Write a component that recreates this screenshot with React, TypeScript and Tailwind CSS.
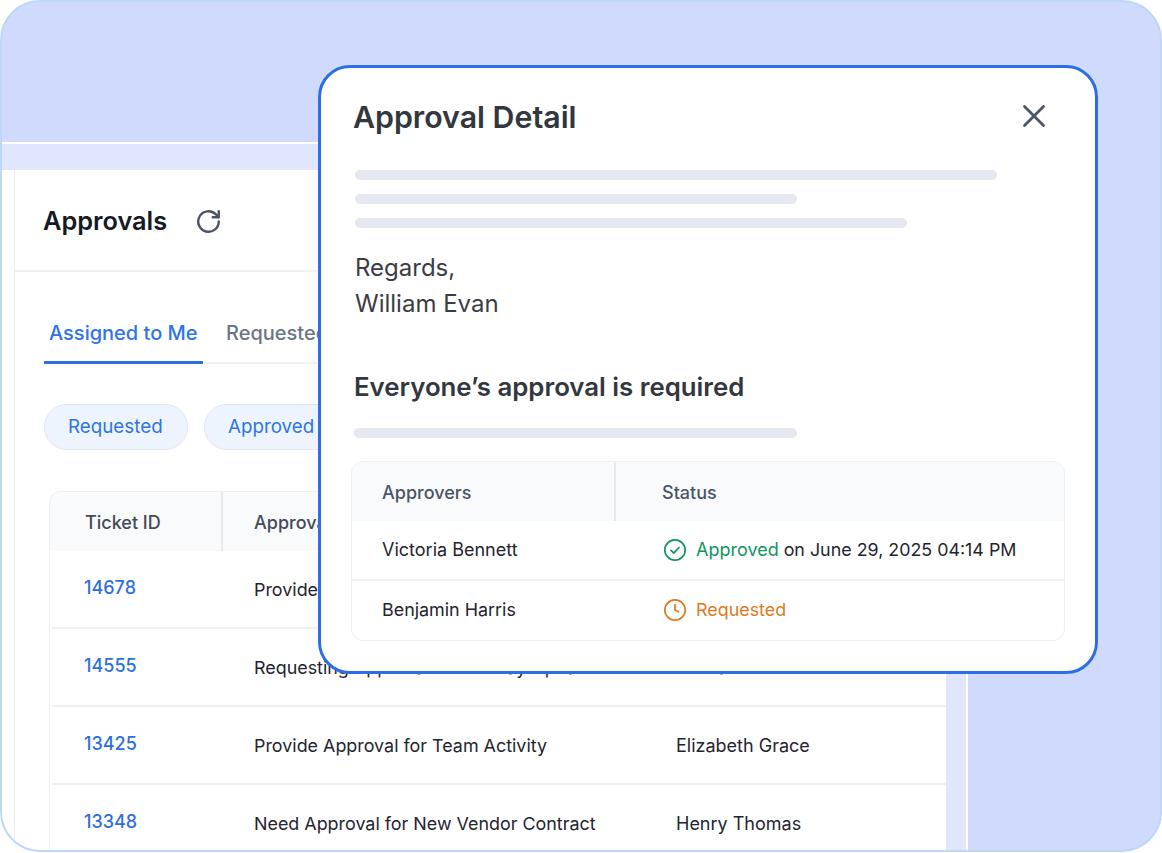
import React from 'react';

const rows = [
  { id: '14678', subject: 'Provide Approval for Marketing Budget', name: 'Olivia Carter' },
  { id: '14555', subject: 'Requesting Approval for Holiday Update', name: 'Michael Anderson' },
  { id: '13425', subject: 'Provide Approval for Team Activity', name: 'Elizabeth Grace' },
  { id: '13348', subject: 'Need Approval for New Vendor Contract', name: 'Henry Thomas' },
];

const App: React.FC = () => {
  return (
    <div className="bg-white w-[1162px] h-[853px] overflow-hidden font-['Inter',sans-serif]">
      <div className="relative w-[1162px] h-[852px] rounded-[40px] border-2 border-[#bcd8f6] bg-[#cfdafc] overflow-hidden pt-[140px]">
        {/* Background approvals page */}
        <div className="w-[966px] h-[710px] border-t-2 border-r-2 border-white bg-[#e0e6fd] pt-[26px]">
          <div className="flex h-full">
            <div className="w-3 bg-white"></div>
            <div className="w-[932px] bg-white border-l border-[#e9ecf1]">
              <div className="h-[102px] border-b-2 border-[#f0f1f4] flex items-center pl-7 pt-0.5">
                <h1 className="text-[25.3px] font-semibold text-[#141a26]">Approvals</h1>
                <svg className="w-[29px] h-[29px] ml-[27px] text-[#4b5563]" fill="none" stroke="currentColor" strokeWidth={2} strokeLinecap="round" strokeLinejoin="round" viewBox="0 0 24 24">
                  <path d="M20.5 12a8.5 8.5 0 1 1-2.6-6.1L20.5 8.4" />
                  <path d="M20.5 3.5v5h-5" />
                </svg>
              </div>
              <div className="flex mt-[42px] ml-[29px] border-b-2 border-[#f0f1f4] h-[50px]">
                <div className="w-[159px] h-[50px] border-b-[3px] border-[#2e6fe0] pl-[5px] text-xl font-medium text-[#2e74e6] leading-[38px]">Assigned to Me</div>
                <div className="ml-[23px] text-xl font-medium text-[#6b7488] leading-[38px]">Requested</div>
              </div>
              <div className="flex gap-4 ml-[29px] mt-10">
                <div className="h-[46px] w-[144px] rounded-full border border-[#e2e6ee] bg-[#eef4fd] text-[18.8px] text-[#2e74e6] flex items-center pl-[23px]">Requested</div>
                <div className="h-[46px] w-[144px] rounded-full border border-[#e2e6ee] bg-[#eef4fd] text-[18.8px] text-[#2e74e6] flex items-center pl-[23px]">Approved</div>
              </div>
              <div className="ml-[34px] mt-[41px] w-[897px] rounded-tl-xl border-l border-t border-[#ebeef2]">
                <div className="flex h-[59px] bg-[#f8fafc] rounded-tl-xl items-center text-lg font-medium text-[#434a58]">
                  <div className="w-[173px] h-full pl-[35px] pt-0.5 flex items-center border-r-2 border-[#e6eaef]">Ticket ID</div>
                  <div className="pl-[31px] pt-0.5">Approval Subject</div>
                </div>
                {rows.map((row, i) => (
                  <div key={row.id} className={`flex h-[78px] ml-0.5 ${i === 3 ? '' : 'border-b-2 border-[#eef0f3]'}`}>
                    <div className="w-[170px] pl-8 pt-[23px] text-lg font-medium text-[#2e6fe0]">{row.id}</div>
                    <div className="w-[454px] pl-8 pt-[25px] text-[17.9px] leading-7 text-[#1f2430] whitespace-nowrap">{row.subject}</div>
                    <div className="pt-[25px] text-lg text-[#1f2430] whitespace-nowrap">{row.name}</div>
                  </div>
                ))}
              </div>
            </div>
          </div>
        </div>

        {/* Approval Detail modal */}
        <div className="absolute left-[316px] top-[63px] w-[780px] h-[609px] rounded-[32px] border-[3px] border-[#2d6ee4] bg-white pl-8 pr-[30px]">
          <div className="flex items-center justify-between h-[96px]">
            <h2 className="mt-1 text-[30.3px] font-semibold text-[#333740]">Approval Detail</h2>
            <svg className="w-8 h-8 mr-[15px] text-[#4b5563]" fill="none" stroke="currentColor" strokeWidth={2.8} strokeLinecap="round" viewBox="0 0 32 32">
              <path d="M6.5 6.5l19 19M25.5 6.5l-19 19" />
            </svg>
          </div>
          <div className="flex flex-col gap-[14px] mt-[6px] ml-[2px]">
            <div className="h-2.5 w-[642px] rounded-full bg-[#e5e7f1]"></div>
            <div className="h-2.5 w-[442px] rounded-full bg-[#e5e7f1]"></div>
            <div className="h-2.5 w-[552px] rounded-full bg-[#e5e7f1]"></div>
          </div>
          <div className="mt-[22px] ml-0.5 text-2xl leading-9 text-[#3a3d45]">
            <div>Regards,</div>
            <div>William Evan</div>
          </div>
          <div className="mt-[46px] ml-[1px] text-[25.8px] font-semibold text-[#333740]">Everyone’s approval is required</div>
          <div className="mt-[21px] ml-[1px] h-2.5 w-[443px] rounded-full bg-[#e5e7f1]"></div>
          <div className="mt-[23px] -ml-0.5 w-[714px] rounded-xl border border-[#eceef2] overflow-hidden">
            <div className="flex h-[59px] bg-[#f8fafc] items-center text-lg font-medium text-[#4b5565]">
              <div className="w-[264px] h-full pl-[30px] pt-1 flex items-center border-r-2 border-[#e6eaef]">Approvers</div>
              <div className="pl-[46px] pt-1">Status</div>
            </div>
            <div className="flex h-[60px] items-center border-b-2 border-[#eef0f3] text-lg text-[#1f2430]">
              <div className="w-[265px] pl-[30px]">Victoria Bennett</div>
              <div className="flex items-center pl-[46px]">
                <svg className="w-6 h-6 mr-[9px] text-[#0f9560]" fill="none" stroke="currentColor" strokeWidth={1.7} strokeLinecap="round" strokeLinejoin="round" viewBox="0 0 24 24">
                  <circle cx="12" cy="12" r="10.2" />
                  <path d="M8 12.3l2.8 2.8 5.2-5.6" />
                </svg>
                <span className="text-[#0f9560]">Approved</span>
                <span className="ml-[5px] text-[17.85px]">on June 29, 2025 04:14 PM</span>
              </div>
            </div>
            <div className="flex h-[59px] items-center text-[17.9px] text-[#1f2430]">
              <div className="w-[265px] pl-[30px]">Benjamin Harris</div>
              <div className="flex items-center pl-[46px]">
                <svg className="w-6 h-6 mr-[9px] text-[#e07a1c]" fill="none" stroke="currentColor" strokeWidth={1.7} strokeLinecap="round" strokeLinejoin="round" viewBox="0 0 24 24">
                  <circle cx="12" cy="12" r="10.2" />
                  <path d="M12 6.5V12l3.6 1.8" />
                </svg>
                <span className="text-[#e07a1c]">Requested</span>
              </div>
            </div>
          </div>
        </div>
      </div>
    </div>
  );
};

export default App;
